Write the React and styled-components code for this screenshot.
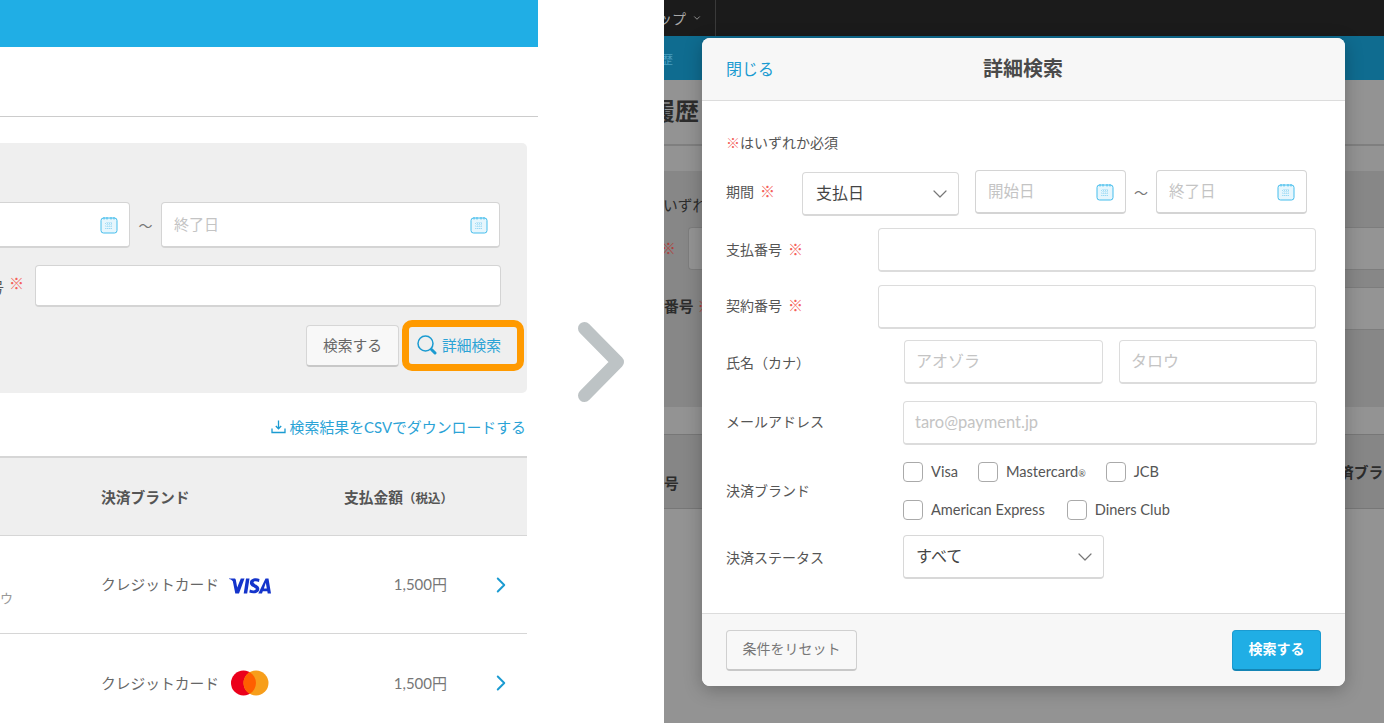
import React from 'react';
import styled, { createGlobalStyle } from 'styled-components';
import { ChevronDown, ChevronRight } from 'lucide-react';

const GlobalStyle = createGlobalStyle`
  html, body { margin: 0; padding: 0; background: #fff; }
  body {
    font-family: "Lato", "Noto Sans CJK JP", sans-serif;
    color: #555;
    overflow: hidden;
  }
`;

const Page = styled.div`
  width: 1384px;
  height: 723px;
  display: flex;
  overflow: hidden;
`;

/* left: cropped page */
const LeftPane = styled.div`
  width: 538px;
  flex: none;
  display: flex;
  flex-direction: column;
  overflow: hidden;
`;

const BlueBar = styled.div`
  height: 47px;
  flex: none;
  background: #20aee5;
`;

const WhiteBand = styled.div`
  height: 69px;
  flex: none;
  border-bottom: 1px solid #ccc;
`;

const SearchCard = styled.div`
  margin: 26px 11px 0 -10px;
  height: 250px;
  flex: none;
  box-sizing: border-box;
  background: #efefef;
  border-radius: 0 5px 5px 0;
  padding: 59px 26px 0 0;
  display: flex;
  flex-direction: column;
`;

const DateRow = styled.div`
  display: flex;
  align-items: center;
  height: 46px;
`;

const DateField = styled.div`
  box-sizing: border-box;
  height: ${p => p.$h || 46}px;
  width: ${p => p.$w}px;
  flex: none;
  padding: 0 11px ${p => p.$pb || 0}px 12px;
  background: #fff;
  border: 1px solid #d4d4d4;
  border-bottom-width: 2px;
  border-radius: 4px;
  display: flex;
  align-items: center;
  justify-content: space-between;
  font-size: ${p => p.$fs || 15}px;
  color: #c4c4c4;
  & svg { margin-top: ${p => p.$pb || 0}px; }
`;

const Tilde = styled.span`
  width: ${p => p.$w}px;
  flex: none;
  text-align: center;
  font-size: 14px;
  color: #777;
`;

const NumberRow = styled.div`
  display: flex;
  align-items: center;
  margin-top: 17px;
  height: 42px;
`;

const Partial = styled.span`
  width: 45px;
  flex: none;
  box-sizing: border-box;
  padding-right: 11px;
  display: flex;
  justify-content: flex-end;
  gap: 5px;
  font-size: 14.75px;
  color: #555;
  white-space: nowrap;
`;

const Mark = styled.span`
  color: #f4615a;
  font-size: 15px;
  line-height: 1;
`;

const PlainInput = styled.div`
  box-sizing: border-box;
  height: 42px;
  width: 466px;
  flex: none;
  background: #fff;
  border: 1px solid #d4d4d4;
  border-bottom-width: 2px;
  border-radius: 4px;
`;

const CardActions = styled.div`
  display: flex;
  justify-content: flex-end;
  align-items: center;
  gap: 3px;
  margin: 13px -23px 0 0;
`;

const GhostButton = styled.button`
  box-sizing: border-box;
  width: 93px;
  height: 42px;
  padding: 0 0 2px;
  background: #f8f8f8;
  border: 1px solid #d6d6d6;
  border-bottom: 2px solid #c8c8c8;
  border-radius: 4px;
  font-family: inherit;
  font-size: 14.75px;
  color: #666;
`;

const HighlightButton = styled.button`
  box-sizing: border-box;
  width: 122px;
  height: 51px;
  padding: 0 0 2px 8px;
  background: #efefef;
  border: 7px solid #ff9a00;
  border-radius: 10px;
  display: flex;
  align-items: center;
  gap: 5px;
  font-family: inherit;
  font-size: 14.75px;
  color: #2ba3d6;
`;

const CsvLink = styled.div`
  margin: 23px 12px 0 0;
  height: 20px;
  display: flex;
  justify-content: flex-end;
  align-items: center;
  gap: 4px;
  font-size: 14.9px;
  white-space: nowrap;
  color: #2ba3d6;
`;

const TableHead = styled.div`
  margin-top: 20px;
  margin-right: 11px;
  height: 80px;
  flex: none;
  box-sizing: border-box;
  background: #efefef;
  border-top: 2px solid #d6d6d6;
  border-bottom: 1px solid #d6d6d6;
  display: grid;
  grid-template-columns: 101px 148px 199px;
  align-items: center;
  font-size: 14.75px;
  font-weight: 700;
  color: #555;
`;

const AmountHead = styled.span`
  text-align: right;
  white-space: nowrap;
  margin-right: -5px;
  & small { font-size: 12.5px; }
`;

const TableRow = styled.div`
  margin-right: 11px;
  height: 98px;
  flex: none;
  box-sizing: border-box;
  border-bottom: ${p => (p.$last ? 'none' : '1px solid #d6d6d6')};
  display: grid;
  grid-template-columns: 101px 148px 199px 79px;
  align-items: center;
  font-size: 14.75px;
  color: #666;
`;

const NameCut = styled.span`
  font-size: 13px;
  color: #999;
  align-self: end;
  padding-bottom: 26px;
`;

const BrandCell = styled.span`
  display: flex;
  align-items: center;
  gap: 10px;
  white-space: nowrap;
  margin-top: -2px;
  & svg { flex: none; margin-top: ${p => p.$logoDy}px; }
`;

const Amount = styled.span`
  text-align: right;
  margin-top: -2px;
  padding-right: 1px;
  font-size: 15px;
  color: #777;
`;

const RowArrow = styled.span`
  display: flex;
  padding-left: 40px;
  color: #1b9bd1;
`;

/* arrow between the two screens */
const Between = styled.div`
  width: 126px;
  flex: none;
  display: flex;
  align-items: center;
  justify-content: center;
  padding-top: 1px;
`;

/* right: app behind a modal */
const RightPane = styled.div`
  position: relative;
  width: 720px;
  flex: none;
  background: #939393;
  overflow: hidden;
  display: flex;
  flex-direction: column;
`;

const DarkBar = styled.div`
  height: 36px;
  flex: none;
  background: #1b1b1b;
  color: #a8a8a8;
  display: flex;
  align-items: center;
  font-size: 14px;
`;

const MenuLabel = styled.span`
  width: 52px;
  height: 100%;
  box-sizing: border-box;
  border-right: 1px solid #3a3a3a;
  display: flex;
  align-items: center;
  gap: 6px;
  white-space: nowrap;
  text-indent: -6px;
`;

const TealBar = styled.div`
  height: 44px;
  flex: none;
  background: #0f6c90;
  color: #4a9fc0;
  font-size: 12px;
  text-indent: -3px;
  display: flex;
  align-items: center;
`;

const BackTitle = styled.div`
  height: 66px;
  flex: none;
  box-sizing: border-box;
  border-bottom: 2px solid #7f7f7f;
  font-size: 24px;
  font-weight: 700;
  color: #2c2c2c;
  padding-top: 14px;
  line-height: 34px;
  text-indent: -13px;
  overflow: hidden;
  white-space: nowrap;
`;

const BackCard = styled.div`
  margin-top: 25px;
  height: 236px;
  flex: none;
  box-sizing: border-box;
  background: #878787;
  padding-top: 22px;
  display: flex;
  flex-direction: column;
  font-size: 14.75px;
  color: #2c2c2c;
`;

const BackNote = styled.div`
  height: 34px;
  line-height: 24px;
  white-space: nowrap;
  text-indent: -1px;
`;

const BackRow = styled.div`
  display: flex;
  align-items: center;
  height: 43px;
  margin-bottom: 17px;
  white-space: nowrap;
`;

const BackLabel = styled.span`
  display: flex;
  gap: 2px;
  font-weight: 700;
  padding-bottom: 6px;
`;

const BackMark = styled.span`
  color: #b0403c;
  font-weight: 400;
  margin-left: ${p => p.$ml || 0}px;
  padding-bottom: ${p => p.$pb || 0}px;
`;

const BackInput = styled.div`
  flex: 1;
  height: 100%;
  box-sizing: border-box;
  margin-left: ${p => p.$ml}px;
  background: #949494;
  border: 1px solid #7d7d7d;
  border-right: none;
  border-radius: 4px 0 0 4px;
`;

const BackHead = styled.div`
  margin-top: 27px;
  height: 75px;
  flex: none;
  box-sizing: border-box;
  background: #868686;
  border-top: 1px solid #777;
  border-bottom: 1px solid #777;
  display: flex;
  align-items: center;
  justify-content: space-between;
  font-size: 14.75px;
  font-weight: 700;
  color: #2c2c2c;
  white-space: nowrap;
  overflow: hidden;
`;

const HeadLeft = styled.span`
  padding-top: 22px;
`;

const HeadRight = styled.span`
  margin-right: -14px;
`;

const Modal = styled.div`
  position: absolute;
  left: 38px;
  top: 38px;
  width: 643px;
  height: 648px;
  box-sizing: border-box;
  display: flex;
  flex-direction: column;
  background: #fff;
  border-radius: 8px;
  box-shadow: 0 4px 18px rgba(0, 0, 0, 0.25);
  overflow: hidden;
`;

const ModalHeader = styled.div`
  height: 63px;
  flex: none;
  box-sizing: border-box;
  background: #f7f7f7;
  border-bottom: 1px solid #dcdcdc;
  padding: 0 24px 3px;
  display: grid;
  grid-template-columns: 1fr auto 1fr;
  align-items: center;
`;

const CloseLink = styled.span`
  font-size: 16px;
  color: #1b9bd1;
`;

const ModalTitle = styled.span`
  font-size: 20px;
  font-weight: 700;
  color: #4a4a4a;
  margin-left: -1px;
`;

const ModalBody = styled.div`
  flex: 1;
  box-sizing: border-box;
  padding: 32px 28px 0 24px;
  display: flex;
  flex-direction: column;
`;

const Note = styled.div`
  font-size: 14px;
  line-height: 20px;
  color: #555;
  & > span { font-size: 14px; }
`;

const FormRow = styled.div`
  display: flex;
  align-items: center;
  margin-top: ${p => p.$mt}px;
`;

const Label = styled.span`
  box-sizing: border-box;
  width: ${p => p.$w}px;
  flex: none;
  padding-bottom: ${p => p.$pb || 0}px;
  font-size: 14px;
  color: #555;
  white-space: nowrap;
  & > span { margin-left: 6px; }
`;

const SelectBox = styled.div`
  box-sizing: border-box;
  width: ${p => p.$w}px;
  height: 44px;
  flex: none;
  padding: 0 6px 3px ${p => p.$pl}px;
  background: #fff;
  border: 1px solid #d8d8d8;
  border-bottom-width: 2px;
  border-radius: 4px;
  display: flex;
  align-items: center;
  justify-content: space-between;
  font-size: 16px;
  color: #444;
  & svg { color: #777; margin-top: 3px; }
`;

const DateWrap = styled.div`
  display: flex;
  align-items: center;
  margin-left: 16px;
  margin-top: -4px;
`;

const TextField = styled.div`
  box-sizing: border-box;
  width: ${p => p.$w}px;
  height: 44px;
  flex: none;
  margin-left: ${p => p.$ml || 0}px;
  padding: 0 11px ${p => p.$pb || 0}px;
  background: #fff;
  border: 1px solid #dcdcdc;
  border-bottom-width: 2px;
  border-radius: 4px;
  display: flex;
  align-items: center;
  font-size: ${p => p.$fs || 16}px;
  color: #c4c4c4;
`;

const BrandGroup = styled.div`
  display: flex;
  flex-direction: column;
  gap: 18px;
`;

const BrandLine = styled.div`
  display: flex;
  gap: ${p => p.$gap}px;
`;

const CheckItem = styled.label`
  display: flex;
  align-items: center;
  gap: 8px;
  font-size: 14.6px;
  color: #555;
  height: 20px;
  & sup { font-size: 9px; line-height: 1; vertical-align: baseline; }
`;

const CheckBox = styled.span`
  box-sizing: border-box;
  width: 20px;
  height: 20px;
  flex: none;
  margin-top: 2px;
  background: #fff;
  border: 1px solid #aaa;
  border-radius: 4px;
`;

const ModalFooter = styled.div`
  height: 73px;
  flex: none;
  box-sizing: border-box;
  background: #f7f7f7;
  border-top: 1px solid #dcdcdc;
  padding: 0 24px;
  display: flex;
  align-items: center;
  justify-content: space-between;
`;

const ResetButton = styled.button`
  box-sizing: border-box;
  width: 131px;
  height: 41px;
  padding: 0 0 4px;
  background: #f8f8f8;
  border: 1px solid #d0d0d0;
  border-bottom: 2px solid #c8c8c8;
  border-radius: 4px;
  font-family: inherit;
  font-size: 14px;
  color: #777;
`;

const PrimaryButton = styled.button`
  box-sizing: border-box;
  width: 89px;
  height: 41px;
  padding: 0 0 4px;
  background: #20aee5;
  border: 1px solid #1b9bd1;
  border-bottom: 2px solid #1485b5;
  border-radius: 4px;
  font-family: inherit;
  font-size: 14px;
  font-weight: 700;
  color: #fff;
`;

function CalendarIcon() {
  return (
    <svg width="18" height="18" viewBox="0 0 18 18" fill="none">
      <rect x="1" y="2" width="16" height="15" rx="2.5" fill="#e6f6fd" stroke="#45bdec" strokeWidth="1" />
      <path d="M4 1v2.5M7 1v2.5M11 1v2.5M14 1v2.5" stroke="#45bdec" strokeWidth="1" />
      <path d="M5 7.5h8M5 10h8M5 12.5h8M7 6v8M9 6v8M11 6v8" stroke="#8ed6f3" strokeWidth="0.8" strokeDasharray="1 1" />
    </svg>
  );
}

function SearchIcon() {
  return (
    <svg width="20" height="20" viewBox="0 0 20 20" fill="none" stroke="#1b9bd1">
      <circle cx="8.500" cy="8.500" r="7.500" strokeWidth="1.5" />
      <path d="M14.500 14.500l3.500 3.500" strokeWidth="3" strokeLinecap="round" />
    </svg>
  );
}

function DownloadIcon() {
  return (
    <svg width="15" height="15" viewBox="0 0 15 15" fill="none" stroke="#1b9bd1" strokeWidth="1.3">
      <path d="M7.5 1.5v8M4.8 7l2.7 2.8L10.2 7" />
      <path d="M1 9.5v4h13v-4" />
    </svg>
  );
}

function VisaLogo() {
  return (
    <svg width="42" height="16" viewBox="0 0 42 16">
      <path d="M0 .6h5.2c.8 0 1.4.5 1.6 1.2l1.4 7.6L11.800.6h3.700L10 15.400H6.300L3.800 3.200C3 2 1.600 1.200 0 1z" fill="#1434cb" />
      <path d="M17 .6h3.500l-2.300 14.800h-3.500zM30.500 1l-.5 3c-3-1.200-5.500-.8-5.500.6 0 1.800 5.800 2.200 5.800 6.200 0 4.400-5.600 5.500-10 3.800l.6-3.200c3 1.500 5.800 1.300 5.800-.4 0-1.900-5.800-2.200-5.800-6.100C20.900.6 26.500-.6 30.500 1zM36.500.6h3L42 15.400h-3.300l-.4-2.200h-4.500l-.8 2.200h-3.700zm-1.600 9.800h2.900l-1-5.600z" fill="#1434cb" />
    </svg>
  );
}

function MastercardLogo() {
  return (
    <svg width="40" height="26" viewBox="0 0 40 26">
      <circle cx="14.500" cy="13" r="12.500" fill="#eb001b" />
      <circle cx="27" cy="13" r="12.500" fill="#f79e1b" />
      <path d="M20.750 2.200a12.500 12.500 0 0 1 0 21.600a12.500 12.500 0 0 1 0-21.600z" fill="#ff5f00" />
    </svg>
  );
}

function BigChevron() {
  return (
    <svg width="46" height="80" viewBox="0 0 46 80" fill="none">
      <path d="M6.500 6.500L39.500 40L6.500 73.500" stroke="#bdc3c5" strokeWidth="13" strokeLinecap="round" strokeLinejoin="round" />
    </svg>
  );
}

const firstBrands = [['Visa'], ['Mastercard', true], ['JCB']];
const secondBrands = [['American Express'], ['Diners Club']];

function BrandCheck({ name, reg }) {
  return (
    <CheckItem>
      <CheckBox />
      <span>{name}{reg && <sup>®</sup>}</span>
    </CheckItem>
  );
}

export default function App() {
  return (
    <Page>
      <GlobalStyle />
      <LeftPane>
        <BlueBar />
        <WhiteBand />
        <SearchCard>
          <DateRow>
            <DateField $w={140}>
              <span />
              <CalendarIcon />
            </DateField>
            <Tilde $w={31}>〜</Tilde>
            <DateField $w={339} $pb={2}>
              終了日
              <CalendarIcon />
            </DateField>
          </DateRow>
          <NumberRow>
            <Partial>号 <Mark>※</Mark></Partial>
            <PlainInput />
          </NumberRow>
          <CardActions>
            <GhostButton>検索する</GhostButton>
            <HighlightButton>
              <SearchIcon />
              詳細検索
            </HighlightButton>
          </CardActions>
        </SearchCard>
        <CsvLink>
          <DownloadIcon />
          検索結果をCSVでダウンロードする
        </CsvLink>
        <TableHead>
          <span />
          <span>決済ブランド</span>
          <AmountHead>支払金額<small>（税込）</small></AmountHead>
        </TableHead>
        <TableRow>
          <NameCut>ウ</NameCut>
          <BrandCell $logoDy={4}>クレジットカード <VisaLogo /></BrandCell>
          <Amount>1,500円</Amount>
          <RowArrow><ChevronRight size={26} strokeWidth={1.8} /></RowArrow>
        </TableRow>
        <TableRow $last>
          <span />
          <BrandCell $logoDy={2}>クレジットカード <MastercardLogo /></BrandCell>
          <Amount>1,500円</Amount>
          <RowArrow><ChevronRight size={26} strokeWidth={1.8} /></RowArrow>
        </TableRow>
      </LeftPane>

      <Between>
        <BigChevron />
      </Between>

      <RightPane>
        <DarkBar>
          <MenuLabel>ップ <ChevronDown size={10} /></MenuLabel>
        </DarkBar>
        <TealBar>歴</TealBar>
        <BackTitle>履歴</BackTitle>
        <BackCard>
          <BackNote>いずれか</BackNote>
          <BackRow>
            <BackMark $ml={-3} $pb={2}>※</BackMark>
            <BackInput $ml={12} />
          </BackRow>
          <BackRow>
            <BackLabel>番号<BackMark $ml={2}>※</BackMark></BackLabel>
            <BackInput $ml={20} />
          </BackRow>
        </BackCard>
        <BackHead>
          <HeadLeft>号</HeadLeft>
          <HeadRight>済ブラン</HeadRight>
        </BackHead>

        <Modal>
          <ModalHeader>
            <CloseLink>閉じる</CloseLink>
            <ModalTitle>詳細検索</ModalTitle>
          </ModalHeader>
          <ModalBody>
            <Note><Mark>※</Mark>はいずれか必須</Note>
            <FormRow $mt={19}>
              <Label $w={76} $pb={6}>期間<span><Mark>※</Mark></span></Label>
              <SelectBox $w={157} $pl={13}>
                支払日
                <ChevronDown size={24} strokeWidth={1.2} />
              </SelectBox>
              <DateWrap>
                <DateField $w={151} $h={44} $pb={4} $fs={15.5}>
                  開始日
                  <CalendarIcon />
                </DateField>
                <Tilde $w={30}>〜</Tilde>
                <DateField $w={151} $h={44} $pb={4} $fs={15.5}>
                  終了日
                  <CalendarIcon />
                </DateField>
              </DateWrap>
            </FormRow>
            <FormRow $mt={12}>
              <Label $w={152} $pb={2}>支払番号<span><Mark>※</Mark></span></Label>
              <TextField $w={438} />
            </FormRow>
            <FormRow $mt={13}>
              <Label $w={152} $pb={4}>契約番号<span><Mark>※</Mark></span></Label>
              <TextField $w={438} />
            </FormRow>
            <FormRow $mt={11}>
              <Label $w={178}>氏名（カナ）</Label>
              <TextField $w={199} $pb={4}>アオゾラ</TextField>
              <TextField $w={198} $ml={16} $pb={4}>タロウ</TextField>
            </FormRow>
            <FormRow $mt={17}>
              <Label $w={177} $pb={4}>メールアドレス</Label>
              <TextField $w={414} $pb={2} $fs={16.5}>taro@payment.jp</TextField>
            </FormRow>
            <FormRow $mt={16}>
              <Label $w={177}>決済ブランド</Label>
              <BrandGroup>
                <BrandLine $gap={20}>
                  {firstBrands.map(([name, reg]) => <BrandCheck key={name} name={name} reg={reg} />)}
                </BrandLine>
                <BrandLine $gap={22}>
                  {secondBrands.map(([name]) => <BrandCheck key={name} name={name} />)}
                </BrandLine>
              </BrandGroup>
            </FormRow>
            <FormRow $mt={16}>
              <Label $w={177}>決済ステータス</Label>
              <SelectBox $w={201} $pl={12}>
                すべて
                <ChevronDown size={24} strokeWidth={1.2} />
              </SelectBox>
            </FormRow>
          </ModalBody>
          <ModalFooter>
            <ResetButton>条件をリセット</ResetButton>
            <PrimaryButton>検索する</PrimaryButton>
          </ModalFooter>
        </Modal>
      </RightPane>
    </Page>
  );
}
